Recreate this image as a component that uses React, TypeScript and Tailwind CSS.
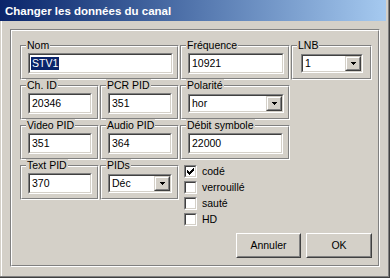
import type { ReactNode } from "react";

type BoxProps = { className?: string; children?: ReactNode };

function Sunken({ className = "", children }: BoxProps) {
  return (
    <div className={`border border-t-[#808080] border-l-[#808080] border-r-white border-b-white ${className}`}>
      <div className="flex h-full items-center border border-t-[#404040] border-l-[#404040] border-r-[#d4d0c8] border-b-[#d4d0c8] bg-white">
        {children}
      </div>
    </div>
  );
}

function Raised({ className = "", children, push }: BoxProps & { push?: boolean }) {
  const outer = push
    ? "border-t-white border-l-white"
    : "border-t-[#d4d0c8] border-l-[#d4d0c8]";
  const inner = push
    ? "border-t-[#d4d0c8] border-l-[#d4d0c8]"
    : "border-t-white border-l-white";
  return (
    <div className={`border ${outer} border-r-[#404040] border-b-[#404040] bg-[#d4d0c8] ${className}`}>
      <div className={`flex h-full w-full items-center justify-center border ${inner} border-r-[#808080] border-b-[#808080]`}>
        {children}
      </div>
    </div>
  );
}

function Group({ label, className = "", children }: BoxProps & { label: string }) {
  return (
    <div className={`relative h-[35px] border border-t-[#808080] border-l-[#808080] border-r-white border-b-white ${className}`}>
      <div className="h-full border border-t-white border-l-white border-r-[#808080] border-b-[#808080] pl-[6px] pt-[6px]">
        {children}
      </div>
      <span className="absolute -top-[7px] left-[5px] bg-[#d4d0c8] px-[1px] text-[10.5px] leading-[12px]">{label}</span>
    </div>
  );
}

function Field({ value, className = "w-[64px]" }: { value: string; className?: string }) {
  return (
    <Sunken className={`h-[21px] ${className}`}>
      <span className="pl-[2px] text-[10.5px] leading-[13px]">{value}</span>
    </Sunken>
  );
}

function Combo({ value, className = "" }: { value: string; className?: string }) {
  return (
    <Sunken className={`mt-[1px] h-[19px] ${className}`}>
      <span className="flex-1 pl-[2px] text-[10.5px] leading-[13px]">{value}</span>
      <Raised className="h-full w-[16px]">
        <svg width="5" height="3" viewBox="0 0 5 3" shapeRendering="crispEdges">
          <rect x="0" y="0" width="5" height="1" fill="#000" />
          <rect x="1" y="1" width="3" height="1" fill="#000" />
          <rect x="2" y="2" width="1" height="1" fill="#000" />
        </svg>
      </Raised>
    </Sunken>
  );
}

const checkRows: [number, number, number][] = [
  [6, 0, 1], [5, 1, 2], [0, 2, 1], [4, 2, 3], [0, 3, 2], [3, 3, 3], [0, 4, 5], [1, 5, 3], [2, 6, 1],
];

function Check({ label, checked }: { label: string; checked?: boolean }) {
  return (
    <div className="flex h-[13px] items-center gap-[5px]">
      <Sunken className="h-[13px] w-[13px]">
        {checked && (
          <svg width="9" height="9" viewBox="0 0 9 9" shapeRendering="crispEdges">
            {checkRows.map(([x, y, w]) => (
              <rect key={`${x}-${y}`} x={x + 1} y={y + 1} width={w} height="1" fill="#000" />
            ))}
          </svg>
        )}
      </Sunken>
      <span className="text-[10.5px] leading-[13px]">{label}</span>
    </div>
  );
}

export default function App() {
  return (
    <div className="flex h-[278px] w-[390px] flex-col border-r border-b border-r-[#404040] border-b-[#404040] bg-[#d4d0c8] font-['Liberation_Sans',Arial,sans-serif] text-black">
      <div className="flex flex-1 flex-col border-r border-b border-r-[#808080] border-b-[#808080]">
        <div className="mr-[2px] flex h-[21px] items-center bg-linear-to-r from-[#0a246a] to-[#a6caf0] pl-[5px]">
          <span className="text-[11.5px] font-bold leading-[14px] text-white">Changer les données du canal</span>
        </div>

        <div className="ml-[1px] flex-1 border-l border-l-white">
          <div className="ml-[8px] mt-[8px] h-[238px] w-[370px] border border-t-[#808080] border-l-[#808080] border-r-white border-b-white">
            <div className="h-full border border-t-white border-l-white border-r-[#808080] border-b-[#808080] pl-[8px] pt-[14px]">
              <div className="grid grid-cols-[79px_79px_110px_81px] grid-rows-[35px_35px_35px] gap-x-[1px] gap-y-[5px]">
                <Group label="Nom" className="col-span-2">
                  <Sunken className="h-[21px] w-[145px]">
                    <span className="ml-[1px] bg-[#0a246a] px-[1px] text-[10.5px] leading-[13px] text-white">STV1</span>
                  </Sunken>
                </Group>
                <Group label="Fréquence">
                  <Field value="10921" className="w-[96px]" />
                </Group>
                <Group label="LNB">
                  <Combo value="1" className="ml-[2px] w-[62px]" />
                </Group>

                <Group label="Ch. ID">
                  <Field value="20346" />
                </Group>
                <Group label="PCR PID">
                  <Field value="351" />
                </Group>
                <Group label="Polarité">
                  <Combo value="hor" className="w-[96px]" />
                </Group>
                <div />

                <Group label="Video PID">
                  <Field value="351" />
                </Group>
                <Group label="Audio PID">
                  <Field value="364" />
                </Group>
                <Group label="Débit symbole">
                  <Field value="22000" className="w-[95px]" />
                </Group>
              </div>

              <div className="mt-[5px] flex items-start gap-x-[1px]">
                <Group label="Text PID" className="w-[79px]">
                  <Field value="370" />
                </Group>
                <Group label="PIDs" className="w-[79px]">
                  <Combo value="Déc" className="w-[64px]" />
                </Group>
                <div className="ml-[4px] flex flex-col gap-[3px]">
                  <Check label="codé" checked />
                  <Check label="verrouillé" />
                  <Check label="sauté" />
                  <Check label="HD" />
                </div>
              </div>

              <div className="mt-[7px] flex justify-end gap-[5px] pr-[6px]">
                <Raised push className="h-[25px] w-[65px]">
                  <span className="text-[10.5px] leading-[13px]">Annuler</span>
                </Raised>
                <Raised push className="h-[25px] w-[66px]">
                  <span className="text-[10.5px] leading-[13px]">OK</span>
                </Raised>
              </div>
            </div>
          </div>
        </div>
      </div>
    </div>
  );
}
